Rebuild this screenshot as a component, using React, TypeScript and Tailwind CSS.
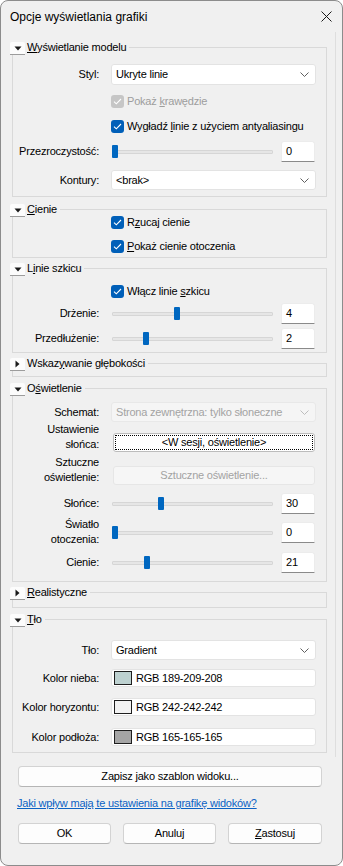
import type { ReactNode } from "react"

const FONT = "font-['Liberation_Sans',Arial,sans-serif]"

function Tri({ open }: { open: boolean }) {
  return (
    <div className="w-[15px] h-[13px] shrink-0 bg-[#fcfcfc] border-b border-[#9c9c9c] rounded-t-[2px] flex items-center justify-center">
      {open ? (
        <svg width="8" height="5" viewBox="0 0 8 5"><path d="M0.5 0.5h7L4 4.5z" fill="#1a1a1a" /></svg>
      ) : (
        <svg width="5" height="8" viewBox="0 0 5 8"><path d="M0.5 0.5v7L4.5 4z" fill="#1a1a1a" /></svg>
      )}
    </div>
  )
}

function Group({
  title,
  open = true,
  mt,
  body,
  children,
}: {
  title: ReactNode
  open?: boolean
  mt: string
  body: string
  children?: ReactNode
}) {
  return (
    <div className={mt}>
      <div className="flex h-[13px]">
        <Tri open={open} />
        <span className="ml-[2px] leading-[11px] whitespace-nowrap">{title}</span>
        <div className="flex-1 ml-[3px] mt-[5px] border-t border-r border-[#d9d9d9]" />
      </div>
      <div className={`ml-[2px] border-l border-r border-b border-[#d9d9d9] flex flex-col ${body}`}>{children}</div>
    </div>
  )
}

function Check({ checked = true, disabled = false, mt, children }: { checked?: boolean; disabled?: boolean; mt: string; children: ReactNode }) {
  return (
    <div className={`flex items-center h-[16px] ml-[98px] ${mt}`}>
      <div
        className={`w-[13px] h-[13px] rounded-[3px] flex items-center justify-center ${
          disabled ? "bg-[#c6c6c6]" : "bg-[#005fb8]"
        }`}
      >
        {checked && (
          <svg width="9" height="7" viewBox="0 0 9 7">
            <path d="M1 3.6l2.3 2.2L8 1" fill="none" stroke="#ffffff" strokeWidth="1.1" />
          </svg>
        )}
      </div>
      <span className={`ml-[3px] whitespace-nowrap ${disabled ? "text-[#9d9d9d]" : "text-black"}`}>{children}</span>
    </div>
  )
}

function Chevron({ dim = false }: { dim?: boolean }) {
  return (
    <svg width="9" height="5" viewBox="0 0 9 5" className="shrink-0">
      <path d="M0.5 0.5L4.5 4.5L8.5 0.5" fill="none" stroke={dim ? "#bdbdbd" : "#5f5f5f"} strokeWidth="1" />
    </svg>
  )
}

function Label({ children, two = false }: { children: ReactNode; two?: boolean }) {
  return (
    <div className={`w-[86px] shrink-0 text-right ${two ? "leading-[15px]" : ""}`}>{children}</div>
  )
}

function Combo({ value, disabled = false, h = "h-[20px]" }: { value: string; disabled?: boolean; h?: string }) {
  return (
    <div
      className={`ml-[12px] w-[205px] ${h} rounded-[3px] border flex items-center justify-between pl-[4px] pr-[6px] ${
        disabled ? "bg-[#f5f5f5] border-[#e8e8e8] text-[#a3a3a3]" : "bg-white border-[#e3e3e3] text-black"
      }`}
    >
      <span className="whitespace-nowrap">{value}</span>
      <Chevron dim={disabled} />
    </div>
  )
}

function NumBox({ value }: { value: string }) {
  return (
    <div className="ml-[8px] w-[34px] h-[21px] bg-white border border-[#ececec] border-b-[#8a8a8a] rounded-t-[3px] flex items-center pl-[4px]">
      {value}
    </div>
  )
}

function Slider({ pos }: { pos: string }) {
  return (
    <div className="ml-[12px] w-[162px] h-[13px] relative flex items-center">
      <div className="ml-[1px] w-[161px] h-[4px] bg-[#e6e6e6] border border-[#d6d6d6] rounded-[1px]" />
      <div className={`absolute top-0 left-[1px] w-[6px] h-[13px] bg-[#0067c0] rounded-[1px] ${pos}`} />
    </div>
  )
}

function ColorRow({ label, swatch, value, mt }: { label: string; swatch: string; value: string; mt: string }) {
  return (
    <div className={`flex items-center h-[18px] ${mt}`}>
      <Label>{label}</Label>
      <div className="ml-[12px] w-[205px] h-[18px] bg-white border border-[#e3e3e3] rounded-[3px] flex items-center pl-[2px]">
        <div className={`w-[18px] h-[14px] border border-[#1e1e1e] ${swatch}`} />
        <span className="ml-[4px]">{value}</span>
      </div>
    </div>
  )
}

export default function App() {
  return (
    <div
      className={`${FONT} text-[11px] tracking-[-0.2px] text-black w-[343px] h-[866px] bg-[#f0f0f0] border border-[#8c8c8c] rounded-[8px] flex flex-col overflow-hidden`}
    >
      <div className="h-[31px] shrink-0 flex items-center justify-between pl-[9px] pr-[10px] text-[12px] tracking-normal">
        <span>Opcje wyświetlania grafiki</span>
        <svg width="11" height="11" viewBox="0 0 11 11">
          <path d="M0.5 0.5l10 10M10.5 0.5l-10 10" stroke="#1a1a1a" strokeWidth="1" />
        </svg>
      </div>

      <div className="w-[335px] border-r border-[#dedede] pt-[10px] pl-[9px] pr-[8px] pb-[4px]">
        <Group
          mt="mt-0"
          title={
            <>
              <u>W</u>yświetlanie modelu
            </>
          }
          body="pb-[6px]"
        >
          <div className="flex items-center h-[21px] mt-[9px]">
            <Label>Styl:</Label>
            <Combo value="Ukryte linie" h="h-[21px]" />
          </div>
          <Check disabled mt="mt-[8px]">
            Pokaż <u>k</u>rawędzie
          </Check>
          <Check mt="mt-[9px]">
            Wygładź <u>l</u>inie z użyciem antyaliasingu
          </Check>
          <div className="flex items-center h-[21px] mt-[7px]">
            <Label>Przezroczystość:</Label>
            <Slider pos="ml-0" />
            <NumBox value="0" />
          </div>
          <div className="flex items-center h-[20px] mt-[8px]">
            <Label>Kontury:</Label>
            <Combo value="<brak>" />
          </div>
        </Group>

        <Group
          mt="mt-[7px]"
          title={
            <>
              <u>C</u>ienie
            </>
          }
          body="pb-[3px]"
        >
          <Check mt="mt-[-3px]">
            R<u>z</u>ucaj cienie
          </Check>
          <Check mt="mt-[8px]">
            <u>P</u>okaż cienie otoczenia
          </Check>
        </Group>

        <Group
          mt="mt-[5px]"
          title={
            <>
              L<u>i</u>nie szkicu
            </>
          }
          body="pb-[3px]"
        >
          <Check mt="mt-[7px]">
            Włącz linie <u>s</u>zkicu
          </Check>
          <div className="flex items-center h-[21px] mt-[4px]">
            <Label>Drżenie:</Label>
            <Slider pos="ml-[62px]" />
            <NumBox value="4" />
          </div>
          <div className="flex items-center h-[21px] mt-[4px]">
            <Label>Przedłużenie:</Label>
            <Slider pos="ml-[31px]" />
            <NumBox value="2" />
          </div>
        </Group>

        <Group
          mt="mt-[5px]"
          open={false}
          title={
            <>
              Wskaz<u>y</u>wanie głębokości
            </>
          }
          body="h-[6px]"
        />

        <Group
          mt="mt-[6px]"
          title={
            <>
              O<u>ś</u>wietlenie
            </>
          }
          body="pb-[8px]"
        >
          <div className="flex items-center h-[20px] mt-[6px]">
            <Label>Schemat:</Label>
            <Combo value="Strona zewnętrzna: tylko słoneczne" disabled />
          </div>
          <div className="flex items-end mt-0">
            <Label two>
              Ustawienie
              <br />
              słońca:
            </Label>
            <div className="ml-[14px] w-[202px] h-[19px] bg-white border border-[#bcbcbc] rounded-[3px] p-[1px] flex">
              <div className="flex-1 border border-dotted border-black flex items-center justify-center">
                &lt;W sesji, oświetlenie&gt;
              </div>
            </div>
          </div>
          <div className="flex items-end mt-[3px]">
            <Label two>
              Sztuczne
              <br />
              oświetlenie:
            </Label>
            <div className="ml-[14px] w-[202px] h-[19px] bg-[#f6f6f6] border border-[#e6e6e6] rounded-[3px] flex items-center justify-center text-[#a3a3a3]">
              Sztuczne oświetlenie...
            </div>
          </div>
          <div className="flex items-center h-[21px] mt-[8px]">
            <Label>Słońce:</Label>
            <Slider pos="ml-[46px]" />
            <NumBox value="30" />
          </div>
          <div className="flex items-end mt-[3px]">
            <Label two>
              Światło
              <br />
              otoczenia:
            </Label>
            <div className="mb-[4px] flex items-center h-[21px]">
              <Slider pos="ml-0" />
              <NumBox value="0" />
            </div>
          </div>
          <div className="flex items-center h-[21px] mt-[5px]">
            <Label>Cienie:</Label>
            <Slider pos="ml-[32px]" />
            <NumBox value="21" />
          </div>
        </Group>

        <Group
          mt="mt-[5px]"
          open={false}
          title={
            <>
              <u>R</u>ealistyczne
            </>
          }
          body="h-[8px]"
        />

        <Group
          mt="mt-[6px]"
          title={
            <>
              <u>T</u>ło
            </>
          }
          body="pb-[6px]"
        >
          <div className="flex items-center h-[20px] mt-[13px]">
            <Label>Tło:</Label>
            <Combo value="Gradient" />
          </div>
          <ColorRow label="Kolor nieba:" swatch="bg-[#bdd1d0]" value="RGB 189-209-208" mt="mt-[9px]" />
          <ColorRow label="Kolor horyzontu:" swatch="bg-[#f2f2f2]" value="RGB 242-242-242" mt="mt-[11px]" />
          <ColorRow label="Kolor podłoża:" swatch="bg-[#a5a5a5]" value="RGB 165-165-165" mt="mt-[12px]" />
        </Group>
      </div>

      <div className="px-[16px] flex flex-col">
        <button className="mt-[9px] ml-[1px] w-[304px] h-[21px] bg-[#fdfdfd] border border-[#d3d3d3] border-b-[#b5b5b5] rounded-[4px]">
          Zapisz jako szablon widoku...
        </button>
        <a className="mt-[9px] leading-[15px] text-[#0b62c4] underline whitespace-nowrap">
          Jaki wpływ mają te ustawienia na grafikę widoków?
        </a>
        <div className="mt-[12px] ml-[1px] flex gap-[12px]">
          <button className="w-[93px] h-[21px] bg-[#fdfdfd] border border-[#d3d3d3] border-b-[#b5b5b5] rounded-[4px]">OK</button>
          <button className="w-[93px] h-[21px] bg-[#fdfdfd] border border-[#d3d3d3] border-b-[#b5b5b5] rounded-[4px]">Anuluj</button>
          <button className="w-[94px] h-[21px] bg-[#fdfdfd] border border-[#d3d3d3] border-b-[#b5b5b5] rounded-[4px]">
            <u>Z</u>astosuj
          </button>
        </div>
      </div>
    </div>
  )
}
